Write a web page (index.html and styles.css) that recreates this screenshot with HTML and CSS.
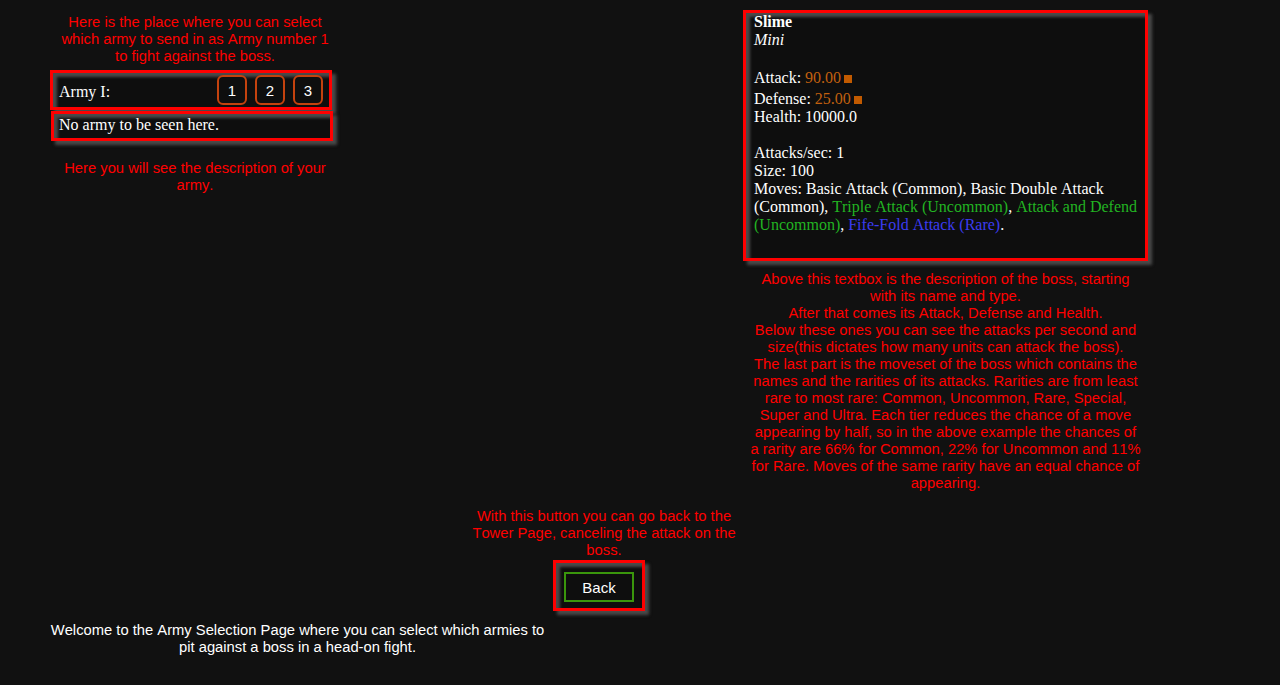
FILE: index.html
```html
<!DOCTYPE html>
<html lang="en">
<head>
<meta charset="utf-8">
<title>Army Selection</title>
<link rel="stylesheet" href="styles.css">
</head>
<body>
<div class="page">
  <div class="row">
    <section class="left-col">
      <p class="hint hint-left">Here is the place where you can select which army to send in as Army number 1 to fight against the boss.</p>
      <div class="panel army-box">
        <span class="army-label">Army I:</span>
        <div class="army-buttons">
          <button class="num-btn">1</button>
          <button class="num-btn">2</button>
          <button class="num-btn">3</button>
        </div>
      </div>
      <div class="panel army-desc">No army to be seen here.</div>
      <p class="hint hint-left hint-desc">Here you will see the description of your army.</p>
    </section>
    <section class="right-col">
      <div class="panel boss-box">
        <div class="boss-name">Slime</div>
        <div class="boss-type">Mini</div>
        <div class="stats">
          <div class="stat stat-attack">Attack: <span class="val">90.00</span><span class="sq"></span></div>
          <div class="stat">Defense: <span class="val">25.00</span><span class="sq"></span></div>
          <div class="stat">Health: 10000.0</div>
        </div>
        <div class="rates">
          <div>Attacks/sec: 1</div>
          <div>Size: 100</div>
          <div>Moves: Basic Attack (Common), Basic Double Attack (Common), <span class="uncommon">Triple Attack (Uncommon)</span>, <span class="uncommon">Attack and Defend (Uncommon)</span>, <span class="rare">Fife-Fold Attack (Rare)</span>.</div>
        </div>
      </div>
      <p class="hint boss-hint">Above this textbox is the description of the boss, starting with its name and type.<br>After that comes its Attack, Defense and Health.<br>Below these ones you can see the attacks per second and size(this dictates how many units can attack the boss).<br>The last part is the moveset of the boss which contains the names and the rarities of its attacks. Rarities are from least rare to most rare: Common, Uncommon, Rare, Special, Super and Ultra. Each tier reduces the chance of a move appearing by half, so in the above example the chances of a rarity are 66% for Common, 22% for Uncommon and 11% for Rare. Moves of the same rarity have an equal chance of appearing.</p>
    </section>
  </div>
  <section class="back-section">
    <p class="hint">With this button you can go back to the Tower Page, canceling the attack on the boss.</p>
    <div class="back-wrap">
      <div class="panel back-frame">
        <button class="back-btn">Back</button>
      </div>
    </div>
  </section>
  <p class="welcome">Welcome to the Army Selection Page where you can select which armies to pit against a boss in a head-on fight.</p>
</div>
</body>
</html>
```
FILE: styles.css
```css
html, body {
  margin: 0;
  background: #111111;
}

body {
  font-family: "Liberation Sans", Arial, sans-serif;
  font-size: 14.75px;
  line-height: 17px;
  font-kerning: none;
  color: #ffffff;
}

.page {
  padding-top: 10px;
  min-height: 675px;
}

.row {
  display: flex;
  align-items: flex-start;
}

.hint {
  margin: 0;
  color: #ff0000;
  text-align: center;
}

.panel {
  box-sizing: border-box;
  border: 3px solid #ff0000;
  background: #0e0e0e;
  box-shadow: 4px 4px 3px #4a4a4a, inset 4px 4px 3px #4a4a4a;
}

/* Left column */
.left-col {
  margin-left: 50px;
  width: 286px;
  padding-top: 4px;
}

.hint-left {
  width: 276px;
  margin-left: 7px;
}

.army-box {
  width: 282px;
  height: 40px;
  margin-top: 5px;
  padding: 0 6px;
  display: flex;
  align-items: center;
  justify-content: space-between;
  font-family: "Liberation Serif", "Times New Roman", serif;
  font-size: 16px;
  line-height: 18px;
}

.army-label {
  padding-top: 3px;
}

.army-buttons {
  display: flex;
  gap: 8px;
}

.num-btn {
  box-sizing: border-box;
  width: 30px;
  height: 30px;
  padding: 0;
  border: 2px solid #c4420e;
  border-radius: 6px;
  background: #0e0e0e;
  color: #ffffff;
  font-family: "Liberation Sans", Arial, sans-serif;
  font-size: 15px;
}

.army-desc {
  width: 282px;
  margin: 1px 0 0 1px;
  padding: 2px 5px 4px;
  font-family: "Liberation Serif", "Times New Roman", serif;
  font-size: 16px;
  line-height: 18px;
}

.hint-desc {
  margin-top: 18.5px;
}

/* Right column */
.right-col {
  margin-left: 407px;
  width: 405px;
}

.boss-box {
  width: 405px;
  padding: 0 4px 24px 8px;
  font-family: "Liberation Serif", "Times New Roman", serif;
  font-size: 16px;
  line-height: 18px;
}

.boss-name {
  font-weight: bold;
}

.boss-type {
  font-style: italic;
}

.stats {
  margin-top: 20px;
}

.stat-attack {
  margin-bottom: 3px;
}

.val {
  color: #c2600e;
}

.sq {
  display: inline-block;
  width: 8px;
  height: 8px;
  margin-left: 3px;
  background: #c25a00;
}

.rates {
  margin-top: 18px;
}

.uncommon {
  color: #22b422;
}

.rare {
  color: #3c3cf0;
}

.boss-hint {
  width: 392px;
  margin: 9.5px auto 0;
}

/* Back section */
.back-section {
  width: 280px;
  margin: 16px 0 0 464px;
}

.back-wrap {
  display: flex;
  justify-content: center;
  margin-top: 1.5px;
}

.back-frame {
  margin-right: 10px;
  padding: 9px 8px 6px;
}

.back-btn {
  display: block;
  box-sizing: border-box;
  width: 70px;
  height: 30px;
  padding: 0;
  border: 2px solid #3a960c;
  background: #0e0e0e;
  color: #ffffff;
  font-family: "Liberation Sans", Arial, sans-serif;
  font-size: 15px;
}

.welcome {
  width: 505px;
  margin: 10.5px 0 0 45px;
  text-align: center;
}
```
